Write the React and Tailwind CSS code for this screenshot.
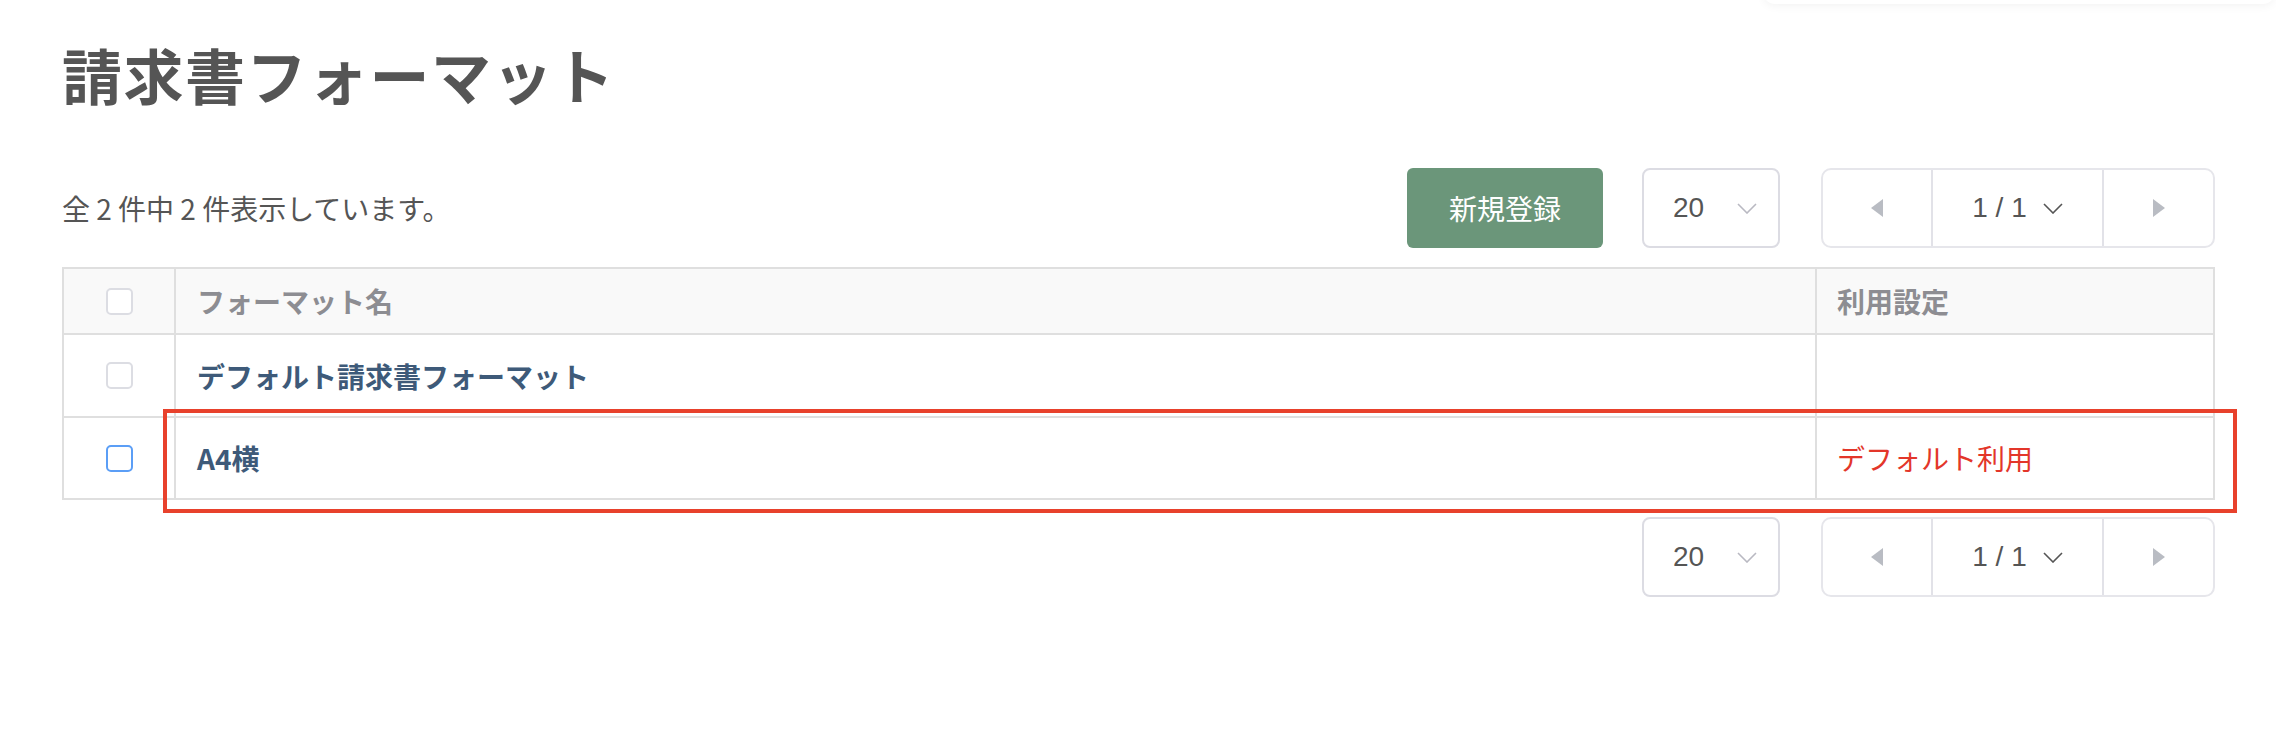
import React from 'react';

const jp = { fontFamily: '"Noto Sans CJK JP", "Noto Sans", sans-serif' };

function Chevron({ className }) {
  return (
    <svg width="20" height="11" viewBox="0 0 20 11" fill="none" className={className} aria-hidden="true">
      <polyline points="1,1 10,10 19,1" stroke="currentColor" strokeWidth="1.6" />
    </svg>
  );
}

function PerPage() {
  return (
    <div className="flex h-[80px] w-[138px] items-center justify-between rounded-[8px] border-2 border-[#dcdce3] bg-white pl-[29px] pr-[21px]">
      <span className="font-['Liberation_Sans',sans-serif] text-[28px] text-[#555]">20</span>
      <Chevron className="text-[#b9b9c2]" />
    </div>
  );
}

function Pager() {
  return (
    <div className="flex h-[80px] w-[394px] overflow-hidden rounded-[10px] border-2 border-[#e6e6eb] bg-white">
      <button className="grid w-[108px] place-items-center">
        <svg width="12" height="18" viewBox="0 0 12 18" aria-hidden="true">
          <polygon points="12,0 0,9 12,18" fill="#b9bcc3" />
        </svg>
      </button>
      <div className="flex flex-1 items-center justify-center gap-[16px] border-x-2 border-[#e2e2e8]">
        <span className="font-['Liberation_Sans',sans-serif] text-[28px] text-[#555]">1 / 1</span>
        <Chevron className="text-[#555]" />
      </div>
      <button className="grid w-[109px] place-items-center">
        <svg width="12" height="18" viewBox="0 0 12 18" aria-hidden="true">
          <polygon points="0,0 12,9 0,18" fill="#b9bcc3" />
        </svg>
      </button>
    </div>
  );
}

function Checkbox({ active }) {
  return (
    <span
      className={
        active
          ? 'block h-[27px] w-[27px] rounded-[5px] border-2 border-[#5b9ef6] bg-white'
          : 'block h-[27px] w-[27px] rounded-[5px] border-2 border-[#dcdde3] bg-white'
      }
    />
  );
}

const rows = [
  { name: 'デフォルト請求書フォーマット', usage: '', h: 'h-[83px]' },
  { name: 'A4横', usage: 'デフォルト利用', h: 'h-[82px]', active: true },
];

export default function App() {
  return (
    <div className="relative h-[754px] w-[2276px] overflow-hidden bg-white pl-[62px] pr-[61px]" style={jp}>
      <div className="pointer-events-none absolute -top-[30px] left-[1764px] h-[34px] w-[510px] rounded-b-[10px] bg-white shadow-[0_2px_10px_rgba(0,0,0,0.05)]" />

      <h1 className="pt-[34px] text-[60px] font-bold leading-[80px] tracking-[1.5px] text-[#555]">請求書フォーマット</h1>

      <div className="mt-[54px] flex h-[80px] items-center">
        <p className="flex-1 text-[28px] text-[#555]">全 2 件中 2 件表示しています。</p>
        <button className="h-[80px] w-[196px] rounded-[6px] bg-[#6b967a] text-[28px] text-white">新規登録</button>
        <div className="ml-[39px]">
          <PerPage />
        </div>
        <div className="ml-[41px]">
          <Pager />
        </div>
      </div>

      <div className="relative mt-[19px]">
        <div className="border-2 border-[#dfdfdf]">
          <div className="grid h-[64px] grid-cols-[110px_1fr_398px] bg-[#f9f9f9]">
            <div className="grid place-items-center">
              <Checkbox />
            </div>
            <div className="flex items-center border-l-2 border-[#dfdfdf] pl-[21px] text-[28px] font-bold text-[#8d8d92]">
              フォーマット名
            </div>
            <div className="flex items-center border-l-2 border-[#dfdfdf] pl-[20px] text-[28px] font-bold text-[#8d8d92]">
              利用設定
            </div>
          </div>
          {rows.map((r) => (
            <div key={r.name} className={`grid ${r.h} grid-cols-[110px_1fr_398px] border-t-2 border-[#dfdfdf]`}>
              <div className="grid place-items-center">
                <Checkbox active={r.active} />
              </div>
              <div className="flex items-center border-l-2 border-[#dfdfdf] pl-[21px] text-[28px] font-bold text-[#3e5a79]">
                {r.name}
              </div>
              <div className="flex items-center border-l-2 border-[#dfdfdf] pl-[20px] text-[28px] text-[#e3362a]">
                {r.usage}
              </div>
            </div>
          ))}
        </div>
        <div className="pointer-events-none absolute left-[101px] top-[142px] h-[104px] w-[2074px] border-4 border-[#e8412c]" />
      </div>

      <div className="mt-[17px] flex justify-end">
        <PerPage />
        <div className="ml-[41px]">
          <Pager />
        </div>
      </div>
    </div>
  );
}
